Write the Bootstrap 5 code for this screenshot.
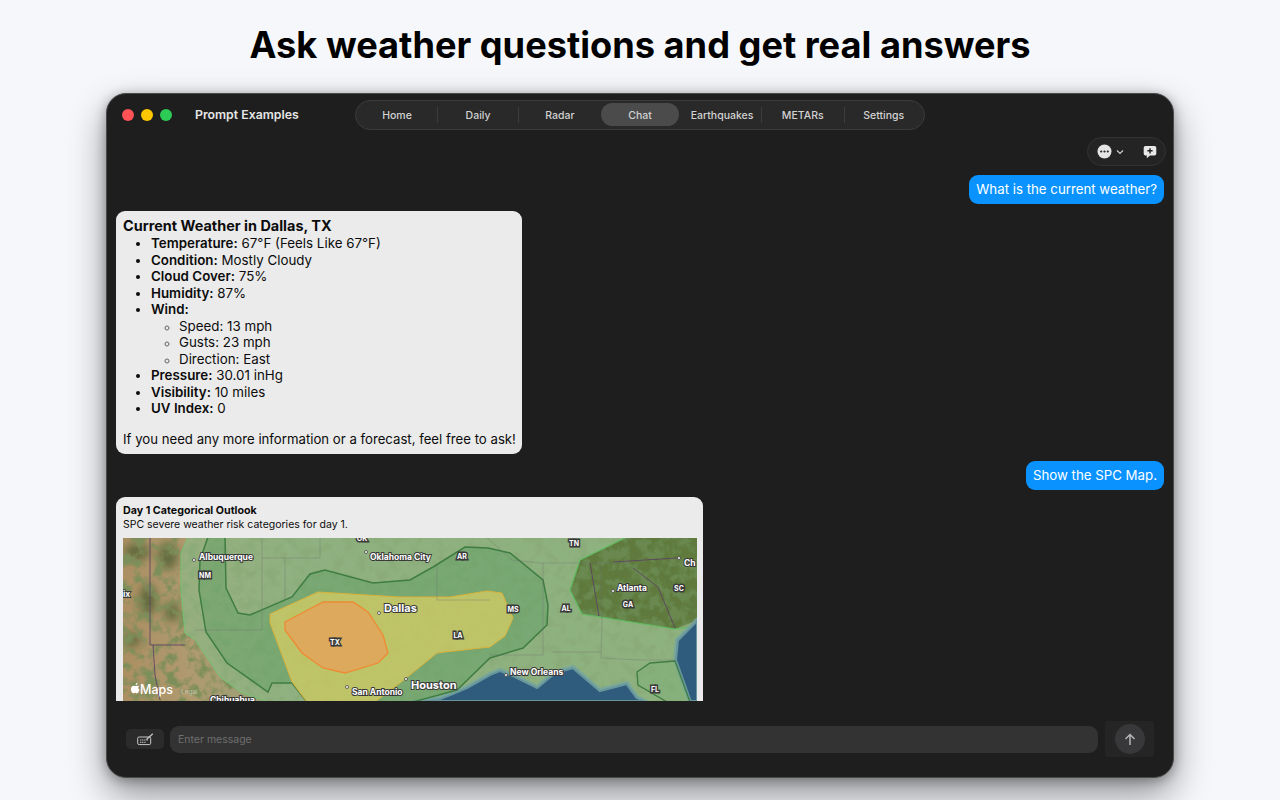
<!DOCTYPE html>
<html lang="en">
<head>
    <meta charset="UTF-8">
    <meta name="viewport" content="width=device-width, initial-scale=1.0">
    <title>Ask weather questions</title>
    <link href="https://cdn.jsdelivr.net/npm/bootstrap@5.3.1/dist/css/bootstrap.min.css" rel="stylesheet">
    <style>
        html, body { height: 100%; }
        body { background: #f5f7fb; font-family: Inter, "Liberation Sans", sans-serif; overflow: hidden; }
        .hero-title { height: 93px; margin: 0; padding-top: 23px; font-size: 36.2px; font-weight: 700; line-height: 44px; color: #000; text-align: center; }
        .app-window { width: 1068px; height: 685px; background: #1e1e1e; border: 1px solid #4a4a4a; border-radius: 20px; box-shadow: 0 16px 36px rgba(0,0,0,.42), 0 2px 12px rgba(0,0,0,.3); }
        .title-bar { height: 43px; padding: 0 0 2px 15px; flex: none; }
        .lights-row { gap: 7px; }
        .light { width: 12px; height: 12px; border-radius: 50%; }
        .light-red { background: #ff5257; }
        .light-yellow { background: #ffc700; }
        .light-green { background: #2dcb55; }
        .win-name { width: 160px; margin-left: 23px; padding-top: 2px; font-size: 12.3px; font-weight: 600; color: #e6e6e6; }
        .tab-pill { width: 570px; height: 30px; padding: 2px 1px; background: #292929; border: 1px solid #3b3b3b; border-radius: 15px; }
        .tab-cell { flex: 1; padding-top: 2px; font-size: 10.5px; font-weight: 500; color: #d2d2d2; border-right: 1px solid #3c3c3c; height: 16px; margin-top: 4px; }
        .tab-cell.no-line { border-right: 0; }
        .tab-cell.on { height: 23px; margin-top: 0; padding-top: 3px; background: #4b4b4b; border: 0; border-radius: 12px; flex-grow: .98; }
        .tab-cell.roomy { flex-grow: 1.02; }
        .tab-cell.tight { flex-grow: .98; }
        .tab-text-nudge { transform: translateX(2px); }
        .chat-pane { flex: 1; min-height: 0; overflow: hidden; padding: 0 9px 0 9px; }
        .tool-pill { width: 79px; height: 29px; margin-right: -2px; margin-bottom: 9px; padding: 0 8px 0 9px; background: #242424; border: 1px solid #333; border-radius: 15px; }
        .msg-user { height: 29px; padding: 0 7px; background: #0a93ff; color: #fff; border-radius: 9px; font-size: 13.28px; line-height: 28px; margin-bottom: 7px; }
        .msg-bot { background: #ebebeb; color: #0c0c0c; border-radius: 9px; margin-bottom: 7px; }
        .weather-card { width: 406px; padding: 6px 7px 7px; font-size: 13.35px; line-height: 16.5px; }
        .weather-card h6 { font-size: 14.45px; font-weight: 700; line-height: 18px; margin: 0; }
        .weather-card ul { margin: 0; padding-left: 28px; }
        .weather-card ul ul { list-style: circle; }
        .weather-card ul ul li::marker { color: #666; font-size: 11px; }
        .weather-card b { font-weight: 600; }
        .weather-card p { margin: 14px 0 0; font-size: 13.2px; white-space: nowrap; }
        .map-card { width: 587px; padding: 7px 6px 0 7px; font-size: 10.5px; line-height: 14px; }
        .map-card h6 { font-size: 10.7px; font-weight: 700; line-height: 14px; margin: 0; }
        .map-card p { margin: 0 0 6px; }
        .map-art { display: block; width: 574px; height: 300px; }
        .map-label { font-family: Inter, "Liberation Sans", sans-serif; font-weight: 700; font-size: 8.5px; fill: #fff; stroke: #3a3a3a; stroke-width: 2px; paint-order: stroke; }
        .map-label.big { font-size: 11px; }
        .map-label.abbr { font-size: 7px; text-anchor: middle; stroke-width: 3px; }
        .composer { height: 76px; flex: none; padding: 0 19px; }
        .kbd-btn { width: 38px; height: 20px; margin-right: 6px; background: #2b2b2b; border-radius: 5px; }
        .msg-input { flex: 1; height: 27px; padding: 0 8px; background: #333; border-radius: 9px; font-size: 10.5px; color: #6f6f6f; line-height: 27px; }
        .send-box { width: 49px; height: 36px; margin-left: 7px; background: #252525; border-radius: 3px; }
        .send-round { width: 30px; height: 30px; background: #38383a; border-radius: 50%; }
    </style>
</head>
<body>
    <h1 class="hero-title">Ask weather questions and get real answers</h1>

    <div class="app-window mx-auto d-flex flex-column">
        <div class="title-bar d-flex align-items-center">
            <div class="lights-row d-flex">
                <span class="light light-red"></span>
                <span class="light light-yellow"></span>
                <span class="light light-green"></span>
            </div>
            <div class="win-name">Prompt Examples</div>
            <div class="tab-pill d-flex">
                <div class="tab-cell d-flex align-items-center justify-content-center">Home</div>
                <div class="tab-cell d-flex align-items-center justify-content-center">Daily</div>
                <div class="tab-cell roomy no-line d-flex align-items-center justify-content-center">Radar</div>
                <div class="tab-cell on d-flex align-items-center justify-content-center">Chat</div>
                <div class="tab-cell roomy d-flex align-items-center justify-content-center"><span class="tab-text-nudge">Earthquakes</span></div>
                <div class="tab-cell roomy d-flex align-items-center justify-content-center">METARs</div>
                <div class="tab-cell tight no-line d-flex align-items-center justify-content-center">Settings</div>
            </div>
        </div>

        <div class="chat-pane d-flex flex-column">
            <div class="tool-pill flex-shrink-0 d-flex align-items-center align-self-end">
                <svg width="15" height="15" viewBox="0 0 15 15"><circle cx="7.5" cy="7.5" r="7" fill="#e4e4e4"/><circle cx="4.2" cy="7.5" r="1.1" fill="#242424"/><circle cx="7.5" cy="7.5" r="1.1" fill="#242424"/><circle cx="10.8" cy="7.5" r="1.1" fill="#242424"/></svg>
                <svg class="ms-1" width="8" height="6" viewBox="0 0 8 6"><path d="M1 1.5 L4 4.5 L7 1.5" fill="none" stroke="#cfcfcf" stroke-width="1.2"/></svg>
                <svg class="ms-auto" width="14" height="14" viewBox="0 0 14 14"><path d="M2.5 1 H11.5 A1.8 1.8 0 0 1 13.3 2.8 V8.8 A1.8 1.8 0 0 1 11.5 10.6 H7 L3.8 13.2 V10.6 H2.5 A1.8 1.8 0 0 1 .7 8.8 V2.8 A1.8 1.8 0 0 1 2.5 1 Z" fill="#e8e8e8"/><path d="M7 3.2 V8.4 M4.4 5.8 H9.6" stroke="#242424" stroke-width="1.4"/></svg>
            </div>

            <div class="msg-user flex-shrink-0 align-self-end">What is the current weather?</div>

            <div class="msg-bot weather-card flex-shrink-0">
                <h6>Current Weather in Dallas, TX</h6>
                <ul>
                    <li><b>Temperature:</b> 67°F (Feels Like 67°F)</li>
                    <li><b>Condition:</b> Mostly Cloudy</li>
                    <li><b>Cloud Cover:</b> 75%</li>
                    <li><b>Humidity:</b> 87%</li>
                    <li><b>Wind:</b>
                        <ul>
                            <li>Speed: 13 mph</li>
                            <li>Gusts: 23 mph</li>
                            <li>Direction: East</li>
                        </ul>
                    </li>
                    <li><b>Pressure:</b> 30.01 inHg</li>
                    <li><b>Visibility:</b> 10 miles</li>
                    <li><b>UV Index:</b> 0</li>
                </ul>
                <p>If you need any more information or a forecast, feel free to ask!</p>
            </div>

            <div class="msg-user flex-shrink-0 align-self-end">Show the SPC Map.</div>

            <div class="msg-bot map-card flex-shrink-0">
                <h6>Day 1 Categorical Outlook</h6>
                <p>SPC severe weather risk categories for day 1.</p>
                <svg class="map-art" viewBox="123 538 574 300">
                    <defs>
                        <linearGradient id="landGrad" x1="0" x2="1" y1="0" y2="0">
                            <stop offset="0" stop-color="#ab8f62"/>
                            <stop offset=".12" stop-color="#b09a70"/>
                            <stop offset=".3" stop-color="#8fa378"/>
                            <stop offset="1" stop-color="#8aa672"/>
                        </linearGradient>
                        <filter id="terrain" x="0" y="0" width="100%" height="100%">
                            <feTurbulence type="fractalNoise" baseFrequency=".09" numOctaves="4" seed="7"/>
                            <feColorMatrix values="0 0 0 0 .2  0 0 0 0 .27  0 0 0 0 .1  4 0 0 0 -1.8"/>
                        </filter>
                        <filter id="fineNoise" x="0" y="0" width="100%" height="100%">
                            <feTurbulence type="fractalNoise" baseFrequency=".1" numOctaves="4" seed="3"/>
                            <feColorMatrix values="0 0 0 0 .14  0 0 0 0 .25  0 0 0 0 .08  4.6 0 0 0 -1.9"/>
                        </filter>
                        <filter id="softBlur"><feGaussianBlur stdDeviation="4"/></filter>
                        <clipPath id="gaClip"><path d="M627 537 L580 560 L570 590 L582 614 L675 629 L697 620 V537 Z"/></clipPath>
                    </defs>

                    <rect x="123" y="538" width="574" height="170" fill="url(#landGrad)"/>
                    <g fill="#4d5f33" filter="url(#softBlur)" opacity=".75">
                        <ellipse cx="137" cy="552" rx="13" ry="9"/>
                        <ellipse cx="168" cy="556" rx="10" ry="14"/>
                        <ellipse cx="148" cy="600" rx="9" ry="16"/>
                        <ellipse cx="172" cy="612" rx="8" ry="10"/>
                        <ellipse cx="132" cy="640" rx="9" ry="7"/>
                    </g>
                    <rect x="123" y="538" width="574" height="170" filter="url(#terrain)"/>

                    <!-- general thunder area -->
                    <path d="M188 537 L181 553 L181 590 L185 633 L195 640 L220 677 L242 693 L260 699 L268 702 H697 V627 L675 629 L582 614 L570 590 L580 560 L627 537 Z" fill="#8fb583" fill-opacity=".76" stroke="#74c274" stroke-width="1"/>

                    <!-- untinted southeast -->
                    <path d="M627 537 L580 560 L570 590 L582 614 L675 629 L697 620 V537 Z" fill="#5f7a3c"/>
                    <rect x="565" y="537" width="133" height="95" filter="url(#fineNoise)" clip-path="url(#gaClip)"/>
                    <path d="M627 537 L580 560 L570 590 L582 614 L675 629 L693 627" fill="none" stroke="#62bb62" stroke-width="1.2"/>

                    <!-- gulf and atlantic -->
                    <path d="M413 702 L440 698 L453 693 L467 687 L490 674 L500 670 L515 676 L537 687 L555 672 L573 667 L600 690 L627 683 L637 697 L647 702 Z" fill="#2f5b7d" stroke="#74a5a3" stroke-width="4" stroke-opacity=".8"/>
                    <path d="M697 620 L677 640 L675 660 L690 702 H698 V620 Z" fill="#2f5b7d" stroke="#74a5a3" stroke-width="4" stroke-opacity=".8"/>

                    <!-- slight risk ring -->
                    <path d="M208 537 L200 560 L199 590 L206 632 L227 663 L268 692 L272 683 L292 683 L307 702 H413 L457 690 L490 658 L523 648 L547 625 L548 605 L543 580 L510 553 L488 548 L465 547 L433 567 L410 580 L373 583 L325 570 L310 574 L292 597 L250 615 L238 613 L226 588 L225 537 Z" fill="#3f9552" fill-opacity=".28" stroke="#3f7d42" stroke-width="1.5"/>
                    <path d="M637 672 L650 663 L675 661 L690 702 H667 L638 685 Z" fill="#6fb06f" fill-opacity=".25" stroke="#3f7d42" stroke-width="1.3"/>

                    <!-- enhanced area -->
                    <path d="M270 614 L318 592 L400 597 L450 597 L487 591 L502 593 L513 618 L505 636 L490 647 L437 653 L400 683 L375 702 H307 L292 682 L270 623 Z" fill="#d8cf62" fill-opacity=".72" stroke="#d9b13a" stroke-width="1"/>
                    <path d="M285 622 L323 602 L353 602 L368 612 L383 635 L388 653 L378 663 L345 673 L323 668 L302 653 L285 630 Z" fill="#e3a55a" fill-opacity=".85" stroke="#ee8a34" stroke-width="1.3"/>

                    <!-- state lines -->
                    <g fill="none" stroke="#6b6a70" stroke-width=".6" stroke-opacity=".55">
                        <path d="M195 630 H262 V538"/>
                        <path d="M320 538 V558 H262 M285 558 V600"/>
                        <path d="M437 565 V600 H490"/>
                        <path d="M487 538 L512 560 L540 563 H630"/>
                        <path d="M543 563 V655 H490"/>
                        <path d="M600 563 L602 620 L601 658 L640 660 H675"/>
                        <path d="M552 652 H601"/>
                    </g>
                    <g fill="none" stroke="#5c3f63" stroke-width="1" stroke-opacity=".85">
                        <path d="M590 563 L599 616 M613 562 L677 558 M633 568 L658 587 L675 628"/>
                        <path d="M150 538 V645 H185 M153 645 L155 675 L160 700"/>
                    </g>

                    <!-- places -->
                    <g fill="#fff" stroke="#444" stroke-width=".8">
                        <circle cx="194" cy="560" r="1.5"/><circle cx="366" cy="552" r="1.5"/><circle cx="379" cy="613" r="1.5"/>
                        <circle cx="347" cy="687" r="1.5"/><circle cx="406" cy="679" r="1.5"/><circle cx="506" cy="675" r="1.5"/>
                        <circle cx="613" cy="591" r="1.5"/><circle cx="679" cy="558" r="1.5"/>
                    </g>
                    <text class="map-label" x="199" y="560">Albuquerque</text>
                    <text class="map-label" x="370" y="560">Oklahoma City</text>
                    <text class="map-label big" x="384" y="612">Dallas</text>
                    <text class="map-label big" x="411" y="689">Houston</text>
                    <text class="map-label" x="352" y="695">San Antonio</text>
                    <text class="map-label" x="510" y="675">New Orleans</text>
                    <text class="map-label" x="617" y="591">Atlanta</text>
                    <text class="map-label" x="684" y="566">Ch</text>
                    <text class="map-label" x="210" y="703">Chihuahua</text>
                    <text class="map-label" x="123" y="597">ix</text>
                    <text class="map-label abbr" x="205" y="578">NM</text>
                    <text class="map-label abbr" x="362" y="541">OK</text>
                    <text class="map-label abbr" x="462" y="559">AR</text>
                    <text class="map-label abbr" x="574" y="546">TN</text>
                    <text class="map-label abbr" x="628" y="607">GA</text>
                    <text class="map-label abbr" x="679" y="591">SC</text>
                    <text class="map-label abbr" x="335" y="645">TX</text>
                    <text class="map-label abbr" x="513" y="612">MS</text>
                    <text class="map-label abbr" x="566" y="611">AL</text>
                    <text class="map-label abbr" x="458" y="638">LA</text>
                    <text class="map-label abbr" x="655" y="692">FL</text>

                    <path d="M135.6 684.2 C136.4 683.3 137 683 137.6 682.6 C137.7 683.6 137.2 684.6 136.2 685.2 C135.9 685.4 135.6 685 135.6 684.2 Z M132.5 686 C133.8 685.2 135 686 135.7 686 C136.4 686 137.8 685.1 139.1 686.2 C138 686.9 137.9 689 139.5 689.7 C139 691 138 693.4 136.8 693.3 C136 693.3 135.7 692.8 135 692.8 C134.2 692.8 133.9 693.3 133.2 693.3 C131.8 693.3 129.4 688.1 132.5 686 Z" fill="#fff"/>
                    <text x="140" y="693.5" font-size="12.5" font-weight="500" fill="#fff">Maps</text>
                    <text x="181" y="693.5" font-size="6.5" fill="#fff" fill-opacity=".45">Legal</text>
                </svg>
            </div>
        </div>

        <div class="composer d-flex align-items-center">
            <div class="kbd-btn d-flex align-items-center justify-content-center">
                <svg width="17" height="13" viewBox="0 0 17 13"><rect x=".7" y="4" width="13" height="7.6" rx="1.4" fill="none" stroke="#c8c8c8" stroke-width="1"/><path d="M3 7 H11 M3 9.3 H9" stroke="#c8c8c8" stroke-width="1" stroke-dasharray="1.2 .6"/><path d="M9.5 6.5 L15.8 .8" stroke="#c8c8c8" stroke-width="1.2"/></svg>
            </div>
            <div class="msg-input">Enter message</div>
            <div class="send-box d-flex align-items-center justify-content-center">
                <div class="send-round d-flex align-items-center justify-content-center">
                    <svg width="12" height="13" viewBox="0 0 12 13"><path d="M6 12 V1.5 M1.5 6 L6 1.5 L10.5 6" fill="none" stroke="#b4b4b4" stroke-width="1.5"/></svg>
                </div>
            </div>
        </div>
    </div>

    <script src="https://cdn.jsdelivr.net/npm/bootstrap@5.3.1/dist/js/bootstrap.bundle.min.js"></script>
</body>
</html>
